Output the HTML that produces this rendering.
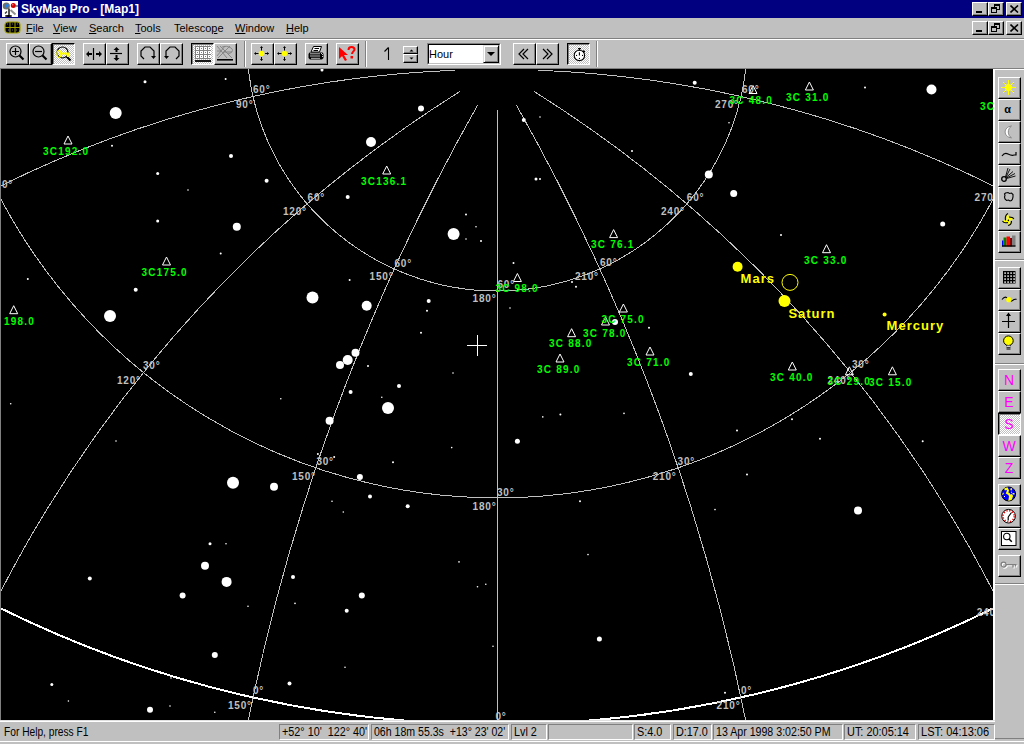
<!DOCTYPE html>
<html><head><meta charset="utf-8">
<style>
*{box-sizing:border-box}
html,body{margin:0;padding:0}
body{width:1024px;height:744px;overflow:hidden;position:relative;background:#c0c0c0;font-family:"Liberation Sans",sans-serif;font-size:11px;color:#000}
.a{position:absolute}
.title{left:0;top:0;width:1024px;height:18px;background:#000080}
.ttext{left:21px;top:2px;color:#fff;font-weight:bold;font-size:12px;line-height:14px;white-space:nowrap}
.cb{position:absolute;width:16px;height:14px;background:#c0c0c0;border-top:1px solid #fff;border-left:1px solid #fff;border-right:1px solid #000;border-bottom:1px solid #000;box-shadow:inset -1px -1px 0 #808080}
.menu{left:0;top:18px;width:1024px;height:20px}
.mi{position:absolute;top:22px;font-size:11px;line-height:13px;white-space:nowrap}
.u{text-decoration:underline}
.tb{position:absolute;top:43px;width:23px;height:22px;background:#c0c0c0;border-top:1px solid #fff;border-left:1px solid #fff;border-right:1px solid #000;border-bottom:1px solid #000;box-shadow:inset -1px -1px 0 #808080}
.tb svg,.rb svg{position:absolute;left:2px;top:2px}
.sep{position:absolute;top:41px;width:2px;height:26px;border-left:1px solid #808080;border-right:1px solid #fff}
.rb{position:absolute;left:998px;width:23px;height:22px;background:#c0c0c0;border-top:1px solid #fff;border-left:1px solid #fff;border-right:1px solid #000;border-bottom:1px solid #000;box-shadow:inset -1px -1px 0 #808080}
.tb.pr,.rb.pr{border-top:1px solid #000;border-left:1px solid #000;border-right:1px solid #fff;border-bottom:1px solid #fff;box-shadow:inset 1px 1px 0 #808080;background-color:#c0c0c0;background-image:linear-gradient(45deg,#fff 25%,transparent 25%,transparent 75%,#fff 75%),linear-gradient(45deg,#fff 25%,transparent 25%,transparent 75%,#fff 75%);background-size:2px 2px;background-position:0 0,1px 1px}
.rsep{position:absolute;left:995px;width:29px;height:2px;border-top:1px solid #808080;border-bottom:1px solid #fff}
.sp{position:absolute;top:724px;height:16px;border-top:1px solid #808080;border-left:1px solid #808080;border-right:1px solid #fff;border-bottom:1px solid #fff;font-size:12px;line-height:14px;padding-left:2px;white-space:nowrap;overflow:hidden}
.gl{font-family:"Liberation Sans",sans-serif;font-weight:bold;font-size:10px;fill:#c0c0c0;letter-spacing:0.8px}
.gr{font-family:"Liberation Sans",sans-serif;font-weight:bold;font-size:10px;fill:#00ff00;letter-spacing:1.2px}
.pl{font-family:"Liberation Sans",sans-serif;font-weight:bold;font-size:13px;fill:#ffff00;letter-spacing:1px}
</style></head><body>
<!-- title bar -->
<div class="a title"></div>
<svg class="a" style="left:2px;top:1px" width="16" height="16" viewBox="0 0 16 16"><rect width="16" height="16" fill="#fff"/><circle cx="4.3" cy="5" r="3.6" fill="#707070"/><ellipse cx="4.8" cy="4.8" rx="2.2" ry="1.4" fill="#2080f0" transform="rotate(-30 4.8 4.8)"/><circle cx="11.3" cy="4.5" r="2.5" fill="#d00000"/><circle cx="10.8" cy="3.8" r="0.8" fill="#ff8080"/><path d="M13.5 5h2.5" stroke="#404040" stroke-width="1.2"/><path d="M7 7.5v7" stroke="#505050" stroke-width="2"/><path d="M8.5 9l5 4.5" stroke="#909090" stroke-width="2"/><path d="M3 12.5l2-2" stroke="#303030" stroke-width="1.2"/><ellipse cx="6.5" cy="15" rx="3.5" ry="0.9" fill="#000"/></svg>
<div class="a ttext">SkyMap Pro - [Map1]</div>
<div class="cb" style="left:972px;top:2px"><div class="a" style="left:3px;top:8px;width:6px;height:2px;background:#000"></div></div>
<div class="cb" style="left:988px;top:2px"><div class="a" style="left:5px;top:1px;width:6px;height:6px;border:1px solid #000;border-top-width:2px"></div><div class="a" style="left:2px;top:4px;width:6px;height:6px;border:1px solid #000;border-top-width:2px;background:#c0c0c0"></div></div>
<div class="cb" style="left:1006px;top:2px"><svg class="a" style="left:3px;top:2px" width="9" height="8"><path d="M0.5 0.5L8 7.5M8 0.5L0.5 7.5" stroke="#000" stroke-width="1.6"/></svg></div>
<!-- menu bar -->
<svg class="a" style="left:4px;top:21px" width="17" height="13" viewBox="0 0 17 13"><rect x="1" y="1" width="15" height="11" rx="3" fill="#000" stroke="#a0a000" stroke-width="1.2"/><path d="M1 6.5h15M6 1v11M11 1v11" stroke="#a0a000" stroke-width="1"/><path d="M3 3h1M8 3h1M13 3h1M4 9h1M8 9h1M12 9h1" stroke="#606080"/></svg>
<div class="mi" style="left:26px"><span class="u">F</span>ile</div>
<div class="mi" style="left:53px"><span class="u">V</span>iew</div>
<div class="mi" style="left:89px"><span class="u">S</span>earch</div>
<div class="mi" style="left:135px"><span class="u">T</span>ools</div>
<div class="mi" style="left:174px">Telesco<span class="u">p</span>e</div>
<div class="mi" style="left:235px"><span class="u">W</span>indow</div>
<div class="mi" style="left:286px"><span class="u">H</span>elp</div>
<div class="cb" style="left:972px;top:21px"><div class="a" style="left:3px;top:8px;width:6px;height:2px;background:#000"></div></div>
<div class="cb" style="left:988px;top:21px"><div class="a" style="left:5px;top:1px;width:6px;height:6px;border:1px solid #000;border-top-width:2px"></div><div class="a" style="left:2px;top:4px;width:6px;height:6px;border:1px solid #000;border-top-width:2px;background:#c0c0c0"></div></div>
<div class="cb" style="left:1006px;top:21px"><svg class="a" style="left:3px;top:2px" width="9" height="8"><path d="M0.5 0.5L8 7.5M8 0.5L0.5 7.5" stroke="#000" stroke-width="1.6"/></svg></div>
<div class="a" style="left:0;top:38px;width:1024px;height:1px;background:#808080"></div>
<div class="a" style="left:0;top:39px;width:1024px;height:1px;background:#fff"></div>
<div class="tb" style="left:6px;top:43px"><svg width="23" height="22" viewBox="0 0 23 22" style="position:absolute;left:-1px;top:-1px"><circle cx="9.5" cy="8.5" r="5.5" fill="none" stroke="#000" stroke-width="1.2"/><path d="M13.5 12.5L17.5 16.5" stroke="#000" stroke-width="2.2"/><path d="M6 8.5h7M9.5 5v7" stroke="#000" stroke-width="1.2"/></svg></div><div class="tb" style="left:29px;top:43px"><svg width="23" height="22" viewBox="0 0 23 22" style="position:absolute;left:-1px;top:-1px"><circle cx="9.5" cy="8.5" r="5.5" fill="none" stroke="#000" stroke-width="1.2"/><path d="M13.5 12.5L17.5 16.5" stroke="#000" stroke-width="2.2"/><path d="M6 8.5h7" stroke="#000" stroke-width="1.2"/></svg></div><div class="tb pr" style="left:52px;top:43px"><svg width="23" height="22" viewBox="0 0 23 22" style="position:absolute;left:-1px;top:-1px"><g transform="translate(1,1)"><circle cx="9.5" cy="8.5" r="5.5" fill="none" stroke="#000" stroke-width="1.2"/><path d="M13.5 12.5L17.5 16.5" stroke="#000" stroke-width="2.2"/></g><ellipse cx="7" cy="11" rx="2" ry="3.5" fill="none" stroke="#ff0" stroke-width="1.2"/><path d="M8 10.5h9" stroke="#ff0" stroke-width="2"/><path d="M14 10h4v2l-2 2h-1z" fill="#ff0"/></svg></div><div class="tb" style="left:83px;top:43px"><svg width="23" height="22" viewBox="0 0 23 22" style="position:absolute;left:-1px;top:-1px"><path d="M10.5 5v12" stroke="#000" stroke-width="1.2"/><path d="M5 11h4M13 11h4" stroke="#000" stroke-width="2"/><path d="M3 11l3-3v6zM19 11l-3-3v6z" fill="#000"/></svg></div><div class="tb" style="left:106px;top:43px"><svg width="23" height="22" viewBox="0 0 23 22" style="position:absolute;left:-1px;top:-1px"><path d="M4 10.5h12" stroke="#000" stroke-width="1.2"/><path d="M10.5 6v3M10.5 12v4" stroke="#000" stroke-width="2"/><path d="M10.5 4l-3 3h6zM10.5 18l-3-3h6z" fill="#000"/></svg></div><div class="tb" style="left:137px;top:43px"><svg width="23" height="22" viewBox="0 0 23 22" style="position:absolute;left:-1px;top:-1px"><path d="M7 16L4 13V8L8 4h5l4 4v6" fill="none" stroke="#000" stroke-width="1.2"/><path d="M14 13h5l-2.5 3z" fill="#000"/></svg></div><div class="tb" style="left:160px;top:43px"><svg width="23" height="22" viewBox="0 0 23 22" style="position:absolute;left:-1px;top:-1px"><path d="M16 16l3-3V8l-4-4h-5L6 8v6" fill="none" stroke="#000" stroke-width="1.2"/><path d="M4 13h5l-2.5 3z" fill="#000"/></svg></div><div class="tb pr" style="left:191px;top:43px"><svg width="23" height="22" viewBox="0 0 23 22" style="position:absolute;left:-1px;top:-1px"><rect x="4" y="3" width="16" height="13" fill="#808080"/><rect x="5" y="4" width="3" height="3" fill="#fff"/><rect x="6" y="5" width="1" height="1" fill="#808080"/><rect x="5" y="8" width="3" height="3" fill="#fff"/><rect x="6" y="9" width="1" height="1" fill="#808080"/><rect x="5" y="12" width="3" height="3" fill="#fff"/><rect x="6" y="13" width="1" height="1" fill="#808080"/><rect x="9" y="4" width="3" height="3" fill="#fff"/><rect x="10" y="5" width="1" height="1" fill="#808080"/><rect x="9" y="8" width="3" height="3" fill="#fff"/><rect x="10" y="9" width="1" height="1" fill="#808080"/><rect x="9" y="12" width="3" height="3" fill="#fff"/><rect x="10" y="13" width="1" height="1" fill="#808080"/><rect x="13" y="4" width="3" height="3" fill="#fff"/><rect x="14" y="5" width="1" height="1" fill="#808080"/><rect x="13" y="8" width="3" height="3" fill="#fff"/><rect x="14" y="9" width="1" height="1" fill="#808080"/><rect x="13" y="12" width="3" height="3" fill="#fff"/><rect x="14" y="13" width="1" height="1" fill="#808080"/><rect x="17" y="4" width="3" height="3" fill="#fff"/><rect x="18" y="5" width="1" height="1" fill="#808080"/><rect x="17" y="8" width="3" height="3" fill="#fff"/><rect x="18" y="9" width="1" height="1" fill="#808080"/><rect x="17" y="12" width="3" height="3" fill="#fff"/><rect x="18" y="13" width="1" height="1" fill="#808080"/><path d="M4 18h16" stroke="#000" stroke-width="1.8"/></svg></div><div class="tb" style="left:214px;top:43px"><svg width="23" height="22" viewBox="0 0 23 22" style="position:absolute;left:-1px;top:-1px"><path d="M3 3l10 12M6 3l12 12M16 3L4 15M11 3l-8 10M8 4c3-1 6-1 9 1s1 5-3 6M9 9h9M3 8h4" fill="none" stroke="#808080" stroke-width="0.9"/><path d="M3 16.8h16" stroke="#000" stroke-width="1.6"/></svg></div><div class="tb" style="left:251px;top:43px"><svg width="23" height="22" viewBox="0 0 23 22" style="position:absolute;left:-1px;top:-1px"><circle cx="10.5" cy="10.5" r="2.8" fill="#ff0"/><path d="M10.5 4v3.5M10.5 14v3.5M4 10.5h3.5M14 10.5h3.5" stroke="#000" stroke-width="1"/><path d="M10.5 3l-1.5 2h3zM10.5 18l-1.5-2h3zM3 10.5l2-1.5v3zM18 10.5l-2-1.5v3z" fill="#000"/></svg></div><div class="tb" style="left:274px;top:43px"><svg width="23" height="22" viewBox="0 0 23 22" style="position:absolute;left:-1px;top:-1px"><circle cx="10.5" cy="10.5" r="2.8" fill="#ff0"/><path d="M10.5 4v3.5M10.5 14v3.5M4 10.5h3.5M14 10.5h3.5" stroke="#000" stroke-width="1"/><path d="M10.5 3l-1.5 2h3zM10.5 18l-1.5-2h3zM3 10.5l2-1.5v3zM18 10.5l-2-1.5v3z" fill="#000"/></svg></div><div class="tb" style="left:305px;top:43px"><svg width="23" height="22" viewBox="0 0 23 22" style="position:absolute;left:-1px;top:-1px"><path d="M8.5 3.5h8l-2 5.5h-8.5z" fill="#fff" stroke="#000"/><path d="M9.5 5.5h4.5M8.5 7.5h4.5" stroke="#000"/><path d="M4.5 9.5h13l1 1.5v4l-1.5 1.5h-12l-1.5-1.5v-4z" fill="#000"/><path d="M5 10.8h10M5 13h10M6 15.3h9" stroke="#d0d0d0" stroke-width="0.9"/><path d="M16 10l2 2M17 14l1-1" stroke="#fff" stroke-width="0.8"/></svg></div><div class="tb" style="left:336px;top:43px"><svg width="23" height="22" viewBox="0 0 23 22" style="position:absolute;left:-1px;top:-1px"><path d="M3 4v12l3-3 3 5 2-1-3-5h4z" fill="#f00"/><path d="M12.5 7c0-2 1.5-3 3-3s3 1 3 2.5-2.5 2.5-2.5 4.5" fill="none" stroke="#f00" stroke-width="2"/><rect x="14.5" y="13" width="2.5" height="2.5" fill="#f00"/></svg></div><div class="sep" style="left:244px"></div><div class="sep" style="left:365px"></div><div class="sep" style="left:596px"></div><svg class="a" style="left:383px;top:46px" width="8" height="15"><path d="M5.5 1.5V14M1.5 5.5L5.5 1.5" fill="none" stroke="#000" stroke-width="1.1"/></svg><div class="a" style="left:403px;top:46px;width:15px;height:8px;border-top:1px solid #fff;border-left:1px solid #fff;border-right:1px solid #000;border-bottom:1px solid #000;box-shadow:inset -1px -1px 0 #808080"><svg class="a" style="left:5px;top:2px" width="5" height="3"><path d="M2.5 0.5L4.5 2.5H0.5z" fill="#000"/></svg></div><div class="a" style="left:403px;top:54px;width:15px;height:9px;border-top:1px solid #fff;border-left:1px solid #fff;border-right:1px solid #000;border-bottom:1px solid #000;box-shadow:inset -1px -1px 0 #808080"><svg class="a" style="left:5px;top:2px" width="5" height="3"><path d="M0.5 0.5h4L2.5 2.5z" fill="#000"/></svg></div><div class="a" style="left:427px;top:43px;width:74px;height:22px;border-top:1px solid #808080;border-left:1px solid #808080;border-right:1px solid #fff;border-bottom:1px solid #fff"><div class="a" style="left:0;top:0;width:72px;height:20px;border-top:1px solid #000;border-left:1px solid #000;border-right:1px solid #c0c0c0;border-bottom:1px solid #c0c0c0;background:#fff"></div><div class="a" style="left:1px;top:3px;font-size:11px;line-height:14px">Hour</div><div class="a" style="left:55px;top:1px;width:16px;height:18px;background:#c0c0c0;border-top:1px solid #dfdfdf;border-left:1px solid #dfdfdf;border-right:1px solid #000;border-bottom:1px solid #000;box-shadow:inset 1px 1px 0 #fff,inset -1px -1px 0 #808080"><svg class="a" style="left:3px;top:6px" width="8" height="5"><path d="M0 0h8L4 4z" fill="#000"/></svg></div></div><div class="tb" style="left:513px;top:43px"><svg width="23" height="22" viewBox="0 0 23 22" style="position:absolute;left:-1px;top:-1px"><path d="M11 6l-5 5 5 5M15 6l-5 5 5 5" fill="none" stroke="#000" stroke-width="1.2"/></svg></div><div class="tb" style="left:536px;top:43px"><svg width="23" height="22" viewBox="0 0 23 22" style="position:absolute;left:-1px;top:-1px"><path d="M7 6l5 5-5 5M11 6l5 5-5 5" fill="none" stroke="#000" stroke-width="1.2"/></svg></div><div class="tb pr" style="left:567px;top:43px"><svg width="23" height="22" viewBox="0 0 23 22" style="position:absolute;left:-1px;top:-1px"><circle cx="12.4" cy="12.4" r="5.2" fill="#fff" stroke="#000" stroke-width="1.1"/><path d="M12.4 9.2v3.3" stroke="#000" stroke-width="1.1"/><rect x="11.9" y="14.9" width="1.1" height="1.1" fill="#000"/><rect x="9" y="11.9" width="1.1" height="1.1" fill="#000"/><rect x="15" y="11.9" width="1.1" height="1.1" fill="#000"/><path d="M11 5.6h3M12.4 5.6v1.8M15.5 8.5h2.5M16.7 7.3v2.5" stroke="#000" stroke-width="1.1"/></svg></div>
<div class="a" style="left:0;top:68px;width:1024px;height:1px;background:#808080"></div>
<div class="a" style="left:0;top:68px;width:1px;height:652px;background:#808080"></div>
<div class="a" style="left:1px;top:69px;width:992px;height:651px;background:#000"></div>
<svg width="992" height="651" viewBox="1 69 992 651" style="position:absolute;left:1px;top:69px;display:block"><path fill="none" shape-rendering="crispEdges" stroke="#c0c0c0" stroke-width="1" d="M0.00 186.30 A1115.80 1115.80 0 0 1 455.00 70.29"/><path fill="none" shape-rendering="crispEdges" stroke="#c0c0c0" stroke-width="1" d="M538.00 70.25 A1115.80 1115.80 0 0 1 994.00 186.30"/><path fill="none" shape-rendering="crispEdges" stroke="#c0c0c0" stroke-width="1" d="M247.98 66.00 A250.30 250.30 0 0 0 746.02 66.00"/><path fill="none" shape-rendering="crispEdges" stroke="#c0c0c0" stroke-width="1" d="M0.00 197.46 A561.30 561.30 0 0 0 994.00 197.46"/><path fill="none" shape-rendering="crispEdges" stroke="#fff" stroke-width="2" d="M0.00 607.94 A1118.70 1118.70 0 0 0 994.00 607.94"/><path fill="none" shape-rendering="crispEdges" stroke="#c0c0c0" stroke-width="1" d="M460.17 91.30 A1285.90 1285.90 0 0 0 -58.60 725.00"/><path fill="none" shape-rendering="crispEdges" stroke="#c0c0c0" stroke-width="1" d="M533.83 91.30 A1285.90 1285.90 0 0 1 1052.60 725.00"/><path fill="none" shape-rendering="crispEdges" stroke="#c0c0c0" stroke-width="1" d="M477.53 105.30 A2089.90 2089.90 0 0 0 247.41 725.00"/><path fill="none" shape-rendering="crispEdges" stroke="#c0c0c0" stroke-width="1" d="M516.47 105.30 A2089.90 2089.90 0 0 1 746.59 725.00"/><line x1="497.5" y1="110" x2="497.5" y2="721" stroke="#c0c0c0" stroke-width="1"/><circle cx="322.0" cy="70.0" r="1.5" fill="#fff"/><circle cx="317.9" cy="453.9" r="1.0" fill="#fff"/><circle cx="334.2" cy="456.9" r="1.0" fill="#fff"/><circle cx="145.0" cy="81.7" r="1.5" fill="#fff"/><circle cx="225.6" cy="79.0" r="1.0" fill="#fff"/><circle cx="115.7" cy="113.0" r="6.0" fill="#fff"/><circle cx="112.0" cy="145.7" r="1.0" fill="#fff"/><circle cx="231.0" cy="156.0" r="2.0" fill="#fff"/><circle cx="157.7" cy="173.5" r="1.5" fill="#fff"/><circle cx="188.0" cy="190.0" r="0.8" fill="#fff"/><circle cx="266.6" cy="180.8" r="2.0" fill="#fff"/><circle cx="157.7" cy="220.9" r="1.5" fill="#fff"/><circle cx="236.8" cy="226.7" r="4.0" fill="#fff"/><circle cx="220.7" cy="253.6" r="1.0" fill="#fff"/><circle cx="27.8" cy="279.0" r="1.0" fill="#fff"/><circle cx="135.7" cy="289.7" r="2.0" fill="#fff"/><circle cx="110.0" cy="316.0" r="6.0" fill="#fff"/><circle cx="421.0" cy="108.5" r="3.0" fill="#fff"/><circle cx="371.0" cy="142.0" r="5.0" fill="#fff"/><circle cx="347.7" cy="197.0" r="2.0" fill="#fff"/><circle cx="466.0" cy="214.5" r="1.0" fill="#fff"/><circle cx="476.0" cy="226.7" r="0.8" fill="#fff"/><circle cx="453.6" cy="234.0" r="6.0" fill="#fff"/><circle cx="466.0" cy="239.0" r="0.8" fill="#fff"/><circle cx="481.0" cy="241.0" r="1.0" fill="#fff"/><circle cx="349.6" cy="280.0" r="1.0" fill="#fff"/><circle cx="312.5" cy="297.5" r="6.0" fill="#fff"/><circle cx="366.7" cy="305.8" r="5.0" fill="#fff"/><circle cx="428.7" cy="301.0" r="2.0" fill="#fff"/><circle cx="427.0" cy="310.7" r="1.0" fill="#fff"/><circle cx="421.0" cy="332.7" r="1.0" fill="#fff"/><circle cx="355.5" cy="352.7" r="4.0" fill="#fff"/><circle cx="347.7" cy="360.0" r="5.0" fill="#fff"/><circle cx="340.0" cy="365.0" r="4.0" fill="#fff"/><circle cx="368.0" cy="366.0" r="1.0" fill="#fff"/><circle cx="399.0" cy="386.0" r="2.0" fill="#fff"/><circle cx="350.6" cy="392.0" r="2.0" fill="#fff"/><circle cx="453.0" cy="373.0" r="0.8" fill="#fff"/><circle cx="694.7" cy="82.7" r="2.0" fill="#fff"/><circle cx="865.0" cy="87.6" r="1.0" fill="#fff"/><circle cx="931.5" cy="89.5" r="5.0" fill="#fff"/><circle cx="523.8" cy="120.0" r="2.0" fill="#fff"/><circle cx="540.0" cy="117.0" r="0.8" fill="#fff"/><circle cx="729.0" cy="122.7" r="0.8" fill="#fff"/><circle cx="632.0" cy="151.0" r="1.0" fill="#fff"/><circle cx="536.0" cy="179.0" r="1.5" fill="#fff"/><circle cx="540.0" cy="179.0" r="1.0" fill="#fff"/><circle cx="708.8" cy="174.5" r="4.0" fill="#fff"/><circle cx="733.7" cy="193.5" r="3.5" fill="#fff"/><circle cx="942.7" cy="224.0" r="2.5" fill="#fff"/><circle cx="781.0" cy="235.0" r="1.0" fill="#fff"/><circle cx="513.5" cy="263.0" r="1.0" fill="#fff"/><circle cx="576.0" cy="286.8" r="1.0" fill="#fff"/><circle cx="572.0" cy="282.0" r="1.0" fill="#fff"/><circle cx="510.0" cy="308.0" r="0.8" fill="#fff"/><circle cx="649.0" cy="327.8" r="1.0" fill="#fff"/><circle cx="690.8" cy="374.0" r="2.0" fill="#fff"/><circle cx="615.0" cy="322.0" r="3.0" fill="#fff"/><circle cx="381.8" cy="397.3" r="0.8" fill="#fff"/><circle cx="388.0" cy="408.0" r="6.0" fill="#fff"/><circle cx="280.8" cy="398.8" r="0.8" fill="#fff"/><circle cx="10.7" cy="403.7" r="0.8" fill="#fff"/><circle cx="329.6" cy="420.8" r="4.0" fill="#fff"/><circle cx="116.0" cy="441.0" r="0.8" fill="#fff"/><circle cx="451.7" cy="447.6" r="0.8" fill="#fff"/><circle cx="393.0" cy="462.3" r="1.0" fill="#fff"/><circle cx="359.9" cy="477.0" r="3.0" fill="#fff"/><circle cx="233.0" cy="482.8" r="6.0" fill="#fff"/><circle cx="274.0" cy="486.7" r="4.0" fill="#fff"/><circle cx="370.0" cy="496.4" r="2.0" fill="#fff"/><circle cx="407.7" cy="506.2" r="2.0" fill="#fff"/><circle cx="343.3" cy="512.0" r="0.8" fill="#fff"/><circle cx="332.0" cy="501.3" r="0.8" fill="#fff"/><circle cx="210.0" cy="543.8" r="1.5" fill="#fff"/><circle cx="226.0" cy="543.8" r="0.8" fill="#fff"/><circle cx="205.0" cy="565.8" r="4.0" fill="#fff"/><circle cx="226.6" cy="581.9" r="5.0" fill="#fff"/><circle cx="89.8" cy="578.5" r="2.0" fill="#fff"/><circle cx="293.0" cy="577.0" r="2.0" fill="#fff"/><circle cx="182.6" cy="595.6" r="3.0" fill="#fff"/><circle cx="361.8" cy="595.6" r="3.0" fill="#fff"/><circle cx="346.7" cy="610.7" r="2.0" fill="#fff"/><circle cx="295.0" cy="603.4" r="0.8" fill="#fff"/><circle cx="248.0" cy="606.3" r="0.8" fill="#fff"/><circle cx="459.0" cy="561.9" r="0.8" fill="#fff"/><circle cx="477.5" cy="586.8" r="0.8" fill="#fff"/><circle cx="485.8" cy="584.3" r="0.8" fill="#fff"/><circle cx="214.8" cy="655.0" r="3.0" fill="#fff"/><circle cx="345.0" cy="667.3" r="0.8" fill="#fff"/><circle cx="51.8" cy="684.4" r="1.5" fill="#fff"/><circle cx="289.5" cy="683.5" r="2.0" fill="#fff"/><circle cx="68.4" cy="701.0" r="0.8" fill="#fff"/><circle cx="150.0" cy="709.8" r="3.0" fill="#fff"/><circle cx="170.0" cy="706.0" r="0.8" fill="#fff"/><circle cx="214.8" cy="712.3" r="0.8" fill="#fff"/><circle cx="493.0" cy="646.3" r="0.8" fill="#fff"/><circle cx="171.0" cy="678.0" r="0.8" fill="#fff"/><circle cx="517.4" cy="441.3" r="2.5" fill="#fff"/><circle cx="542.8" cy="416.9" r="0.8" fill="#fff"/><circle cx="560.4" cy="414.4" r="1.0" fill="#fff"/><circle cx="624.0" cy="413.4" r="0.8" fill="#fff"/><circle cx="737.0" cy="430.5" r="1.0" fill="#fff"/><circle cx="792.0" cy="419.3" r="1.0" fill="#fff"/><circle cx="820.0" cy="438.8" r="1.0" fill="#fff"/><circle cx="922.7" cy="441.3" r="1.0" fill="#fff"/><circle cx="747.0" cy="474.5" r="1.0" fill="#fff"/><circle cx="715.0" cy="509.6" r="0.8" fill="#fff"/><circle cx="580.0" cy="501.3" r="1.0" fill="#fff"/><circle cx="588.0" cy="554.6" r="0.8" fill="#fff"/><circle cx="858.0" cy="510.6" r="4.0" fill="#fff"/><circle cx="599.4" cy="639.0" r="2.5" fill="#fff"/><circle cx="725.0" cy="692.7" r="1.0" fill="#fff"/><polygon points="68.0,136.0 64.0,144.0 72.0,144.0" fill="none" stroke="#fff" stroke-width="1"/><polygon points="386.7,166.0 382.7,174.0 390.7,174.0" fill="none" stroke="#fff" stroke-width="1"/><polygon points="166.5,257.0 162.5,265.0 170.5,265.0" fill="none" stroke="#fff" stroke-width="1"/><polygon points="13.7,305.7 9.7,313.7 17.7,313.7" fill="none" stroke="#fff" stroke-width="1"/><polygon points="753.0,85.5 749.0,93.5 757.0,93.5" fill="none" stroke="#fff" stroke-width="1"/><polygon points="809.4,82.0 805.4,90.0 813.4,90.0" fill="none" stroke="#fff" stroke-width="1"/><polygon points="613.6,229.6 609.6,237.6 617.6,237.6" fill="none" stroke="#fff" stroke-width="1"/><polygon points="517.4,273.5 513.4,281.5 521.4,281.5" fill="none" stroke="#fff" stroke-width="1"/><polygon points="826.5,244.7 822.5,252.7 830.5,252.7" fill="none" stroke="#fff" stroke-width="1"/><polygon points="623.4,304.0 619.4,312.0 627.4,312.0" fill="none" stroke="#fff" stroke-width="1"/><polygon points="571.6,328.7 567.6,336.7 575.6,336.7" fill="none" stroke="#fff" stroke-width="1"/><polygon points="560.0,354.0 556.0,362.0 564.0,362.0" fill="none" stroke="#fff" stroke-width="1"/><polygon points="650.0,347.0 646.0,355.0 654.0,355.0" fill="none" stroke="#fff" stroke-width="1"/><polygon points="792.3,362.0 788.3,370.0 796.3,370.0" fill="none" stroke="#fff" stroke-width="1"/><polygon points="849.4,366.8 845.4,374.8 853.4,374.8" fill="none" stroke="#fff" stroke-width="1"/><polygon points="892.4,366.8 888.4,374.8 896.4,374.8" fill="none" stroke="#fff" stroke-width="1"/><polygon points="605.5,317.0 601.5,325.0 609.5,325.0" fill="none" stroke="#fff" stroke-width="1"/><text x="253.0" y="93.0" class="gl">60°</text><text x="236.0" y="108.0" class="gl">90°</text><text x="2.0" y="188.0" class="gl">0°</text><text x="307.6" y="201.0" class="gl">60°</text><text x="283.0" y="215.0" class="gl">120°</text><text x="394.5" y="267.0" class="gl">60°</text><text x="369.6" y="280.0" class="gl">150°</text><text x="472.6" y="302.0" class="gl">180°</text><text x="143.0" y="369.0" class="gl">30°</text><text x="117.0" y="384.0" class="gl">120°</text><text x="742.0" y="93.0" class="gl">60°</text><text x="715.0" y="108.0" class="gl">270°</text><text x="686.8" y="201.0" class="gl">60°</text><text x="661.0" y="215.0" class="gl">240°</text><text x="600.0" y="266.0" class="gl">60°</text><text x="575.0" y="280.0" class="gl">210°</text><text x="497.5" y="288.0" class="gl">60°</text><text x="852.0" y="368.0" class="gl">30°</text><text x="827.5" y="384.0" class="gl">240°</text><text x="974.6" y="201.0" class="gl">270°</text><text x="316.4" y="465.0" class="gl">30°</text><text x="292.0" y="480.0" class="gl">150°</text><text x="472.6" y="510.0" class="gl">180°</text><text x="253.0" y="694.0" class="gl">0°</text><text x="228.0" y="709.0" class="gl">150°</text><text x="497.0" y="496.0" class="gl">30°</text><text x="677.6" y="465.0" class="gl">30°</text><text x="652.7" y="480.0" class="gl">210°</text><text x="741.0" y="694.0" class="gl">0°</text><text x="716.6" y="709.0" class="gl">210°</text><text x="495.4" y="720.0" class="gl">0°</text><text x="976.7" y="616.0" class="gl">240°</text><text x="43.0" y="155.0" class="gr">3C192.0</text><text x="361.0" y="185.0" class="gr">3C136.1</text><text x="141.6" y="276.0" class="gr">3C175.0</text><text x="4.0" y="325.0" class="gr">198.0</text><text x="729.5" y="104.0" class="gr">3C 48.0</text><text x="786.0" y="101.0" class="gr">3C 31.0</text><text x="980.0" y="110.0" class="gr">3C</text><text x="591.0" y="248.0" class="gr">3C 76.1</text><text x="495.4" y="292.0" class="gr">3C 98.0</text><text x="804.0" y="264.0" class="gr">3C 33.0</text><text x="601.4" y="323.0" class="gr">3C 75.0</text><text x="583.0" y="337.0" class="gr">3C 78.0</text><text x="549.0" y="347.0" class="gr">3C 88.0</text><text x="537.0" y="373.0" class="gr">3C 89.0</text><text x="627.0" y="366.0" class="gr">3C 71.0</text><text x="770.0" y="381.0" class="gr">3C 40.0</text><text x="827.5" y="385.0" class="gr">3C 29.0</text><text x="869.0" y="386.0" class="gr">3C 15.0</text><circle cx="737.6" cy="266.8" r="5" fill="#ff0"/><circle cx="790" cy="282.4" r="8" fill="none" stroke="#ff0" stroke-width="1"/><circle cx="784.5" cy="301" r="6" fill="#ff0"/><circle cx="884.6" cy="314.6" r="2" fill="#ff0"/><text x="740.6" y="283" class="pl">Mars</text><text x="788.4" y="318" class="pl">Saturn</text><text x="886.6" y="330" class="pl">Mercury</text><path d="M467 345.5h20M477.5 335v21" stroke="#fff" stroke-width="1"/></svg>
<!-- right toolbar -->
<div class="a" style="left:993px;top:69px;width:31px;height:653px;border-left:2px solid #fff;border-top:1px solid #fff"></div><div class="a" style="left:995px;top:738px;width:29px;height:1px;background:#808080"></div>
<div class="rb" style="top:77px"><svg width="23" height="22" viewBox="0 0 23 22" style="position:absolute;left:-1px;top:-1px"><circle cx="10.5" cy="10.5" r="3.5" fill="#ff0"/><path d="M10.5 3v15M3 10.5h15M5 5l11 11M16 5L5 16" stroke="#ff0" stroke-width="1"/></svg></div><div class="rb" style="top:99px"><svg width="23" height="22" viewBox="0 0 23 22" style="position:absolute;left:-1px;top:-1px"><text x="6.3" y="14" style="font-family:Liberation Sans;font-size:11px;font-weight:bold">α</text></svg></div><div class="rb" style="top:121px"><svg width="23" height="22" viewBox="0 0 23 22" style="position:absolute;left:-1px;top:-1px"><path d="M13.5 5C5 6 5 16 13.5 16.8C9.5 14.5 9 8 13.5 5z" fill="#fff" stroke="#808080" stroke-width="0.9"/></svg></div><div class="rb" style="top:143px"><svg width="23" height="22" viewBox="0 0 23 22" style="position:absolute;left:-1px;top:-1px"><path d="M4 13c2-3 4-3 6-2s4 2 6 1h2v-3" fill="none" stroke="#000" stroke-width="1.2"/></svg></div><div class="rb" style="top:165px"><svg width="23" height="22" viewBox="0 0 23 22" style="position:absolute;left:-1px;top:-1px"><circle cx="6" cy="14" r="2.3" fill="none" stroke="#000" stroke-width="1.3"/><path d="M7.5 12L10 3M8 12l4-8M8 12.5l7-6M8.5 13l8.5-4.5M8.5 13.5l9-2.5" stroke="#000" stroke-width="0.9"/></svg></div><div class="rb" style="top:187px"><svg width="23" height="22" viewBox="0 0 23 22" style="position:absolute;left:-1px;top:-1px"><path d="M7.5 6l2.5-.5 1.5 1 2-.5 1.5 1.5v2.5l-.5 2-1 1.5-1.5.5-1.5-1-2 .5-1.5-1.5-.5-2 .5-1.5-.5-1.5z" fill="none" stroke="#000" stroke-width="1.1"/></svg></div><div class="rb" style="top:209px"><svg width="23" height="22" viewBox="0 0 23 22" style="position:absolute;left:-1px;top:-1px"><path d="M10.4 11.4L9 5.5M10.4 11.4L15 8.8M10.4 11.4L12 16M10.4 11.4L5.5 12.5" fill="none" stroke="#ff0" stroke-width="2.4"/><path d="M7.5 11.5C7 9 7.5 6 10 4.5M11 8C13 8 15 8 15.8 10M13.5 12C13.5 14 13 16 10 16.5M10 13.5C8 14 5.5 14 4.5 12" fill="none" stroke="#000" stroke-width="1.1"/><circle cx="10.4" cy="11.4" r="0.8" fill="#000"/></svg></div><div class="rb" style="top:231px"><svg width="23" height="22" viewBox="0 0 23 22" style="position:absolute;left:-1px;top:-1px"><rect x="4" y="9.5" width="1.5" height="6" fill="#00f"/><rect x="5.5" y="6.5" width="3" height="9" fill="#008000"/><rect x="8.5" y="5.5" width="3.5" height="10" fill="#f00"/><rect x="12" y="7" width="2" height="8.5" fill="#800000"/><rect x="14" y="4.5" width="3.5" height="11" fill="#808080"/><path d="M4 15h13.5" stroke="#000" stroke-width="1.3"/></svg></div><div class="rsep" style="top:259px"></div><div class="rb" style="top:267px"><svg width="23" height="22" viewBox="0 0 23 22" style="position:absolute;left:-1px;top:-1px"><rect x="5" y="4" width="12.5" height="12.5" fill="#000"/><rect x="6.3" y="5.3" width="1.6" height="1.6" fill="#e0e0e0"/><rect x="6.3" y="8.3" width="1.6" height="1.6" fill="#e0e0e0"/><rect x="6.3" y="11.3" width="1.6" height="1.6" fill="#e0e0e0"/><rect x="6.3" y="14.3" width="1.6" height="1.6" fill="#e0e0e0"/><rect x="9.3" y="5.3" width="1.6" height="1.6" fill="#e0e0e0"/><rect x="9.3" y="8.3" width="1.6" height="1.6" fill="#e0e0e0"/><rect x="9.3" y="11.3" width="1.6" height="1.6" fill="#e0e0e0"/><rect x="9.3" y="14.3" width="1.6" height="1.6" fill="#e0e0e0"/><rect x="12.3" y="5.3" width="1.6" height="1.6" fill="#e0e0e0"/><rect x="12.3" y="8.3" width="1.6" height="1.6" fill="#e0e0e0"/><rect x="12.3" y="11.3" width="1.6" height="1.6" fill="#e0e0e0"/><rect x="12.3" y="14.3" width="1.6" height="1.6" fill="#e0e0e0"/><rect x="15.3" y="5.3" width="1.6" height="1.6" fill="#e0e0e0"/><rect x="15.3" y="8.3" width="1.6" height="1.6" fill="#e0e0e0"/><rect x="15.3" y="11.3" width="1.6" height="1.6" fill="#e0e0e0"/><rect x="15.3" y="14.3" width="1.6" height="1.6" fill="#e0e0e0"/></svg></div><div class="rb" style="top:289px"><svg width="23" height="22" viewBox="0 0 23 22" style="position:absolute;left:-1px;top:-1px"><path d="M4 10.5c1.5-2 3-3 4.5-2s2 3 4 3.5c2 .5 2.5-1 3.5-1.5s2 0 2.5-.5" fill="none" stroke="#000" stroke-width="1.1"/><circle cx="10.8" cy="10.7" r="2.6" fill="#ff0"/></svg></div><div class="rb" style="top:311px"><svg width="23" height="22" viewBox="0 0 23 22" style="position:absolute;left:-1px;top:-1px"><path d="M4 10.5h13M10.5 3v14" stroke="#000" stroke-width="1.2"/><path d="M10.5 1.5l-2.5 3.5h5z" fill="#000"/></svg></div><div class="rb" style="top:333px"><svg width="23" height="22" viewBox="0 0 23 22" style="position:absolute;left:-1px;top:-1px"><circle cx="10.4" cy="7.7" r="4.8" fill="#ff0" stroke="#000" stroke-width="1"/><path d="M8.5 12.5h4M8.5 14.2h4M8.5 16h4" stroke="#000" stroke-width="1"/><rect x="9" y="12.6" width="3" height="1" fill="#fff"/></svg></div><div class="rsep" style="top:363px"></div><div class="rb" style="top:369px"><svg width="23" height="22" viewBox="0 0 23 22" style="position:absolute;left:-1px;top:-1px"><text x="11" y="16" text-anchor="middle" style="font-family:Liberation Sans;font-size:14px;fill:#ff00ff">N</text></svg></div><div class="rb" style="top:391px"><svg width="23" height="22" viewBox="0 0 23 22" style="position:absolute;left:-1px;top:-1px"><text x="11" y="16" text-anchor="middle" style="font-family:Liberation Sans;font-size:14px;fill:#ff00ff">E</text></svg></div><div class="rb pr" style="top:413px"><svg width="23" height="22" viewBox="0 0 23 22" style="position:absolute;left:-1px;top:-1px"><text x="11" y="16" text-anchor="middle" style="font-family:Liberation Sans;font-size:14px;fill:#ff00ff">S</text></svg></div><div class="rb" style="top:435px"><svg width="23" height="22" viewBox="0 0 23 22" style="position:absolute;left:-1px;top:-1px"><text x="11" y="16" text-anchor="middle" style="font-family:Liberation Sans;font-size:14px;fill:#ff00ff">W</text></svg></div><div class="rb" style="top:457px"><svg width="23" height="22" viewBox="0 0 23 22" style="position:absolute;left:-1px;top:-1px"><text x="11" y="16" text-anchor="middle" style="font-family:Liberation Sans;font-size:14px;fill:#ff00ff">Z</text></svg></div><div class="rb" style="top:484px"><svg width="23" height="22" viewBox="0 0 23 22" style="position:absolute;left:-1px;top:-1px"><circle cx="10.6" cy="10" r="7" fill="#0000ff" stroke="#000" stroke-width="1"/><path d="M6.5 5.5l2.5-1 1 2-1 2.5 2 1 1 2.5-.5 3 1.5-.5 1-3-1.5-1.5M12.5 5l1.5.5M15.5 9v1.5M4.5 9.5l1 .5" fill="none" stroke="#ff0" stroke-width="2"/><path d="M6 12l1 1M13 8l1 .5" stroke="#fff" stroke-width="1"/></svg></div><div class="rb" style="top:506px"><svg width="23" height="22" viewBox="0 0 23 22" style="position:absolute;left:-1px;top:-1px"><circle cx="10.6" cy="10.2" r="6.8" fill="#fff" stroke="#000" stroke-width="1"/><circle cx="10.6" cy="10.2" r="5.6" fill="none" stroke="#e00000" stroke-width="1.6" stroke-dasharray="1.2 1.73"/><path d="M10.2 11L13.5 6.5M10.2 11v3.5" stroke="#000" stroke-width="1.2"/></svg></div><div class="rb" style="top:528px"><svg width="23" height="22" viewBox="0 0 23 22" style="position:absolute;left:-1px;top:-1px"><rect x="3.5" y="3.5" width="14.5" height="14" fill="#fff" stroke="#000" stroke-width="1"/><circle cx="8.8" cy="8.5" r="3.2" fill="none" stroke="#000" stroke-width="1.1"/><path d="M11 11l2.8 2.8" stroke="#000" stroke-width="1.5"/></svg></div><div class="rb" style="top:555px"><svg width="23" height="22" viewBox="0 0 23 22" style="position:absolute;left:-1px;top:-1px"><g transform="translate(1,1)"><circle cx="5.6" cy="9.6" r="2.5" fill="none" stroke="#fff" stroke-width="1.3"/><path d="M8 9.6h10.5M15 9.6v3M17.5 9.6v2" stroke="#fff" stroke-width="1.3"/></g><circle cx="5.6" cy="9.6" r="2.5" fill="none" stroke="#808080" stroke-width="1.3"/><path d="M8 9.6h10.5M15 9.6v3M17.5 9.6v2" stroke="#808080" stroke-width="1.3"/></svg></div><div class="rsep" style="top:583px"></div>
<!-- status bar -->
<div class="a" style="left:0;top:720px;width:995px;height:1px;background:#dfdfdf"></div>
<div class="a" style="left:0;top:721px;width:995px;height:1px;background:#fff"></div>
<div class="a" style="left:0;top:741px;width:1024px;height:1px;background:#fff"></div><div class="a" style="left:4px;top:725px;font-size:12px;line-height:14px;transform:scaleX(0.85);transform-origin:0 0;white-space:nowrap">For Help, press F1</div>
<div class="sp" style="left:279px;width:90px"><span style="display:inline-block;transform:scaleX(0.9);transform-origin:0 0">+52° 10'&nbsp; 122° 40'</span></div><div class="sp" style="left:371px;width:138px"><span style="display:inline-block;transform:scaleX(0.88);transform-origin:0 0">06h 18m 55.3s&nbsp; +13° 23' 02'</span></div><div class="sp" style="left:511px;width:36px"><span style="display:inline-block;transform:scaleX(0.9);transform-origin:0 0">Lvl 2</span></div><div class="sp" style="left:548px;width:85px"><span style="display:inline-block;transform:scaleX(1);transform-origin:0 0"></span></div><div class="sp" style="left:634px;width:37px"><span style="display:inline-block;transform:scaleX(0.9);transform-origin:0 0">S:4.0</span></div><div class="sp" style="left:673px;width:39px"><span style="display:inline-block;transform:scaleX(0.9);transform-origin:0 0">D:17.0</span></div><div class="sp" style="left:713px;width:130px"><span style="display:inline-block;transform:scaleX(0.885);transform-origin:0 0">13 Apr 1998 3:02:50 PM</span></div><div class="sp" style="left:844px;width:72px"><span style="display:inline-block;transform:scaleX(0.91);transform-origin:0 0">UT: 20:05:14</span></div><div class="sp" style="left:918px;width:77px"><span style="display:inline-block;transform:scaleX(0.92);transform-origin:0 0">LST: 04:13:06</span></div>
</body></html>
